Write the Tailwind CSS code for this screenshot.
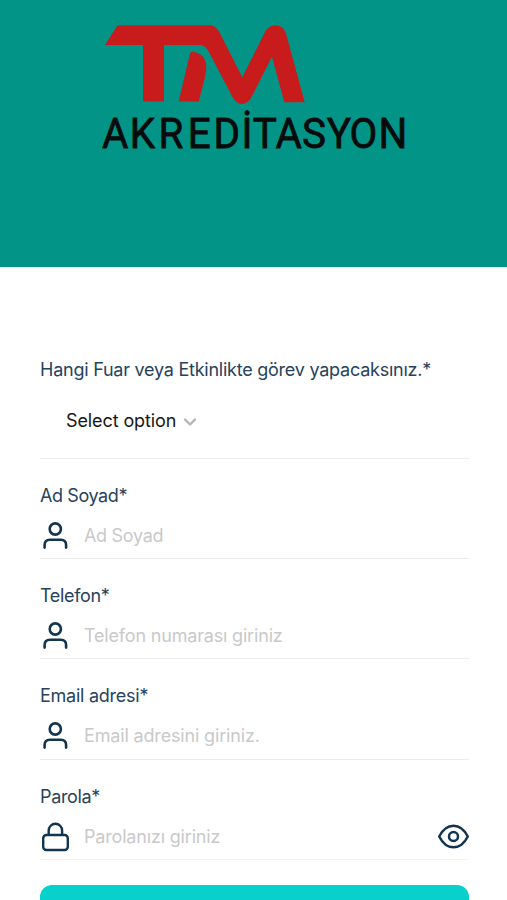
<!DOCTYPE html>
<html lang="tr">

<head>
    <meta charset="UTF-8">
    <meta name="viewport" content="width=device-width, initial-scale=1.0">
    <title>TM Akreditasyon</title>
    <script src="https://cdn.jsdelivr.net/npm/@tailwindcss/browser@4"></script>
</head>

<body class="bg-white font-['Inter',sans-serif] text-lg text-[#27425d] h-[900px] overflow-hidden">
    <!-- logo -->
    <header class="bg-[#039488] h-[267px] flex justify-center">
        <svg class="w-[507px] h-[267px]" viewBox="0 0 507 267" role="img" aria-label="TM Akreditasyon">
            <g fill="#c81b1c">
                <path
                    d="M105 45 117.5 25.3H209C214 25.3 217 28 219.5 32.5L242.3 77.3 265 32C270 22.8 281.5 22.8 285.7 32.5L304.7 102.3H284.3L272 56.7 252 96C247 106.5 237 106.5 232 96L210 54C206.5 47.5 204.5 45 199 45H164V101.5H143V45Z" />
                <path
                    d="M178.7 101.5 190 53.5C190.7 51.5 192 51.4 194 52C202 53.5 206.5 59 206.3 67C206.3 71 205.5 75 204.5 79L198.7 101.5Z" />
            </g>
            <text transform="scale(0.94 1)" y="148"
                x="108.5 138 168.7 199.8 227.1 256.8 268.9 293 321.3 347.6 371.9 402.8" font-size="43"
                class="font-['Roboto',sans-serif] font-normal" fill="#070b0b" stroke="#070b0b"
                stroke-width="0.8">AKREDİTASYON</text>
        </svg>
    </header>

    <form class="pl-10 pr-[38px] pt-[90px]">
        <!-- event -->
        <div class="h-[102px] border-b border-[#ededed] box-border">
            <label class="block leading-[26px] tracking-[-0.24px]">Hangi Fuar veya Etkinlikte görev yapacaksınız.*</label>
            <button type="button" class="flex items-center mt-[25px] ml-[26px] gap-2 text-[#161616] leading-[26px]">
                <span class="tracking-[-0.1px]">Select option</span>
                <svg class="w-3 h-3 mt-0.5" viewBox="0 0 12 12" fill="none" stroke="#b4b4b4" stroke-width="2.4"
                    stroke-linecap="round" stroke-linejoin="round">
                    <path d="M1 3.5 6 8.5 11 3.5" />
                </svg>
            </button>
        </div>

        <!-- full name -->
        <div class="pt-6 h-[100.2px] border-b border-[#ededed]">
            <label class="block leading-[26px] tracking-[-0.4px]" for="name">Ad Soyad*</label>
            <div class="flex items-center h-[54px]">
                <svg class="w-[30px] h-[30px] shrink-0" viewBox="0 0 30 30" fill="none" stroke="#12344f"
                    stroke-width="2.6" stroke-linecap="round">
                    <circle cx="15.3" cy="8" r="5.6" />
                    <path d="M4.6 26.6V24Q4.6 18.7 9.9 18.7H20.8Q26.1 18.7 26.1 24V26.6" />
                </svg>
                <input id="name" type="text" placeholder="Ad Soyad"
                    class="ml-3.5 w-full outline-none tracking-[-0.3px] placeholder:text-[#c9c9c9]">
            </div>
        </div>

        <!-- phone -->
        <div class="pt-6 h-[100.2px] border-b border-[#ededed]">
            <label class="block leading-[26px] tracking-[-0.35px]" for="phone">Telefon*</label>
            <div class="flex items-center h-[54px]">
                <svg class="w-[30px] h-[30px] shrink-0" viewBox="0 0 30 30" fill="none" stroke="#12344f"
                    stroke-width="2.6" stroke-linecap="round">
                    <circle cx="15.3" cy="8" r="5.6" />
                    <path d="M4.6 26.6V24Q4.6 18.7 9.9 18.7H20.8Q26.1 18.7 26.1 24V26.6" />
                </svg>
                <input id="phone" type="tel" placeholder="Telefon numarası giriniz"
                    class="ml-3.5 w-full outline-none tracking-[-0.18px] placeholder:text-[#c9c9c9]">
            </div>
        </div>

        <!-- email -->
        <div class="pt-6 h-[100.2px] border-b border-[#ededed]">
            <label class="block leading-[26px] tracking-[-0.25px]" for="email">Email adresi*</label>
            <div class="flex items-center h-[54px]">
                <svg class="w-[30px] h-[30px] shrink-0" viewBox="0 0 30 30" fill="none" stroke="#12344f"
                    stroke-width="2.6" stroke-linecap="round">
                    <circle cx="15.3" cy="8" r="5.6" />
                    <path d="M4.6 26.6V24Q4.6 18.7 9.9 18.7H20.8Q26.1 18.7 26.1 24V26.6" />
                </svg>
                <input id="email" type="email" placeholder="Email adresini giriniz."
                    class="ml-3.5 w-full outline-none tracking-[-0.16px] placeholder:text-[#c9c9c9]">
            </div>
        </div>

        <!-- password -->
        <div class="pt-6 h-[100.2px] border-b border-[#f3f3f3]">
            <label class="block leading-[26px] tracking-[-0.35px]" for="password">Parola*</label>
            <div class="flex items-center h-[54px]">
                <svg class="w-[30px] h-[30px] shrink-0" viewBox="0 0 30 30" fill="none" stroke="#12344f"
                    stroke-width="2.4">
                    <rect x="3.2" y="13" width="24.6" height="15" rx="3.2" />
                    <path d="M8.7 13V8.5a6.7 6.7 0 0 1 13.4 0V13" />
                </svg>
                <input id="password" type="password" placeholder="Parolanızı giriniz"
                    class="ml-3.5 w-full outline-none tracking-[-0.18px] placeholder:text-[#c9c9c9]">
                <svg class="w-8 h-[26px] shrink-0" viewBox="0 0 32 26" fill="none" stroke="#12344f"
                    stroke-width="2.5" stroke-linejoin="round">
                    <path
                        d="M2.2 12.5C5.5 6 10.5 1.7 16.5 1.7S27.5 6 30.8 12.5C27.5 19 22.5 23.3 16.5 23.3S5.5 19 2.2 12.5Z" />
                    <circle cx="16.5" cy="12.5" r="4.5" />
                </svg>
            </div>
        </div>

        <button type="submit" aria-label="Kaydol" class="block mt-[25px] w-full h-14 rounded-xl bg-[#08d0cb]"></button>
    </form>
</body>

</html>
